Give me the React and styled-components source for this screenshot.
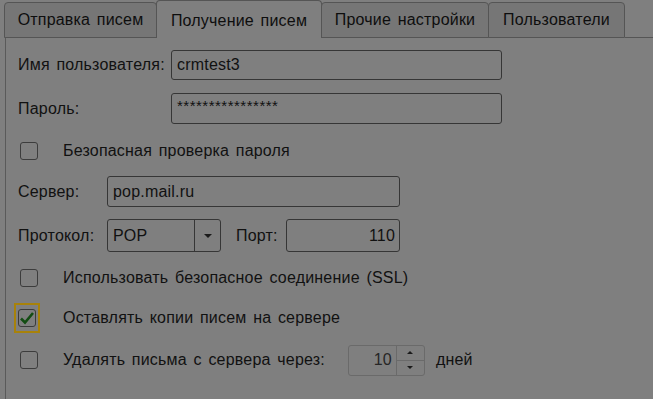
import React from 'react';
import styled, { createGlobalStyle } from 'styled-components';

const GlobalStyle = createGlobalStyle`
    html, body {
        margin: 0;
        padding: 0;
        background: #7f7f7f;
    }
    body {
        font-family: 'Liberation Sans', Arial, sans-serif;
        font-size: 16px;
        letter-spacing: 0.2px;
        word-spacing: 2px;
        color: #111;
    }
`;

const Page = styled.div`
    width: 653px;
    height: 399px;
    overflow: hidden;
    background: #7f7f7f;
`;

const TabBar = styled.div`
    display: flex;
    align-items: flex-end;
    height: 38px;
    padding-left: 5px;
`;

const Tab = styled.div`
    box-sizing: border-box;
    width: ${p => p.$w}px;
    height: ${p => (p.$active ? 38 : 36)}px;
    display: flex;
    align-items: center;
    justify-content: center;
    padding-top: ${p => (p.$active ? 2 : 0)}px;
    background: ${p => (p.$active ? '#7f7f7f' : '#767676')};
    border: 1px solid #555;
    border-bottom: ${p => (p.$active ? 'none' : '1px solid #555')};
    border-radius: 4px 4px 0 0;
    margin-left: -1px;
    color: #0e0e0e;
    white-space: nowrap;
`;

const TabFill = styled.div`
    flex: 1;
    height: 1px;
    background: #555;
`;

const Panel = styled.div`
    margin-left: 5px;
    height: 361px;
    border-left: 1px solid #5a5a5a;
    display: flex;
    flex-direction: column;
    padding-left: 12px;
`;

const Row = styled.div`
    display: flex;
    align-items: center;
    height: ${p => p.$h || 30}px;
    margin-top: ${p => p.$mt}px;
`;

const Label = styled.div`
    width: ${p => p.$w}px;
    padding-left: ${p => p.$pl || 0}px;
    flex-shrink: 0;
    white-space: nowrap;
`;

const Field = styled.div`
    box-sizing: border-box;
    width: ${p => p.$w}px;
    height: 100%;
    border: 1px solid #363636;
    border-radius: 3px;
    display: flex;
    align-items: center;
    justify-content: ${p => (p.$right ? 'flex-end' : 'flex-start')};
    padding: 0 4px 0 5px;
    white-space: nowrap;
`;

const Stars = styled.span`
    font-size: 15px;
    letter-spacing: 0.5px;
    margin-top: -6px;
`;

const Box = styled.div`
    box-sizing: border-box;
    width: 18px;
    height: 18px;
    border: 1px solid #3c3c3c;
    border-radius: 3px;
    display: flex;
    align-items: center;
    justify-content: center;
`;

const Focus = styled.div`
    box-sizing: border-box;
    width: 30px;
    height: 30px;
    margin-left: -6px;
    border: 2px solid #a8820a;
    display: flex;
    align-items: center;
    justify-content: center;
`;

const CheckSlot = styled.div`
    width: 20px;
    margin-left: 2px;
    margin-right: 23px;
    display: flex;
    align-items: center;
    justify-content: flex-start;
`;

const Select = styled.div`
    box-sizing: border-box;
    width: 114px;
    height: 100%;
    border: 1px solid #363636;
    border-radius: 3px;
    display: flex;
`;

const SelectValue = styled.div`
    flex: 1;
    display: flex;
    align-items: center;
    padding-left: 5px;
    border-right: 1px solid #363636;
`;

const SelectArrow = styled.div`
    width: 25px;
    display: flex;
    align-items: center;
    justify-content: center;
`;

const Spin = styled.div`
    box-sizing: border-box;
    width: 77px;
    height: 31px;
    border: 1px solid #6a6a6a;
    border-radius: 3px;
    display: flex;
    margin-left: ${p => p.$ml}px;
`;

const SpinValue = styled.div`
    flex: 1;
    display: flex;
    align-items: center;
    justify-content: flex-end;
    padding-right: 4px;
    border-right: 1px solid #6a6a6a;
    color: #262626;
`;

const SpinButtons = styled.div`
    width: 27px;
    display: flex;
    flex-direction: column;
`;

const SpinButton = styled.div`
    flex: 1;
    display: flex;
    align-items: center;
    justify-content: center;
    border-top: ${p => (p.$lower ? '1px solid #6a6a6a' : 'none')};
`;

const Text = styled.span`
    margin-left: ${p => p.$ml || 0}px;
    white-space: nowrap;
`;

const Tick = () => (
    <svg width="16" height="14" viewBox="0 0 16 14">
        <path d="M2 7.5 L6 11.5 L14 2" fill="none" stroke="#134d13" strokeWidth="2.6" />
    </svg>
);

const Tri = ({ up, size = 4 }) => (
    <svg width={size * 2} height={size} viewBox="0 0 8 4">
        <path d={up ? 'M0 4 L4 0 L8 4 Z' : 'M0 0 L8 0 L4 4 Z'} fill="#1a1a1a" />
    </svg>
);

function CheckRow({ mt, checked, children }) {
    return (
        <Row $mt={mt}>
            <CheckSlot>
                {checked ? (
                    <Focus><Box><Tick /></Box></Focus>
                ) : (
                    <Box />
                )}
            </CheckSlot>
            {children}
        </Row>
    );
}

export default function App() {
    return (
        <Page>
            <GlobalStyle />
            <TabBar>
                <Tab $w={153}>Отправка писем</Tab>
                <Tab $w={166} $active>Получение писем</Tab>
                <Tab $w={168}>Прочие настройки</Tab>
                <Tab $w={137}>Пользователи</Tab>
                <TabFill />
            </TabBar>
            <Panel>
                <Row $mt={12}>
                    <Label $w={153}>Имя пользователя:</Label>
                    <Field $w={331}>crmtest3</Field>
                </Row>
                <Row $mt={13} $h={31}>
                    <Label $w={153}>Пароль:</Label>
                    <Field $w={331}><Stars>****************</Stars></Field>
                </Row>
                <CheckRow mt={12}>
                    <Text>Безопасная проверка пароля</Text>
                </CheckRow>
                <Row $mt={10} $h={31}>
                    <Label $w={89}>Сервер:</Label>
                    <Field $w={293}>pop.mail.ru</Field>
                </Row>
                <Row $mt={12} $h={33}>
                    <Label $w={89}>Протокол:</Label>
                    <Select>
                        <SelectValue>POP</SelectValue>
                        <SelectArrow><Tri /></SelectArrow>
                    </Select>
                    <Label $w={50} $pl={15}>Порт:</Label>
                    <Field $w={114} $right>110</Field>
                </Row>
                <CheckRow mt={11}>
                    <Text>Использовать безопасное соединение (SSL)</Text>
                </CheckRow>
                <CheckRow mt={10} checked>
                    <Text>Оставлять копии писем на сервере</Text>
                </CheckRow>
                <CheckRow mt={12}>
                    <Text>Удалять письма с сервера через:</Text>
                    <Spin $ml={23}>
                        <SpinValue>10</SpinValue>
                        <SpinButtons>
                            <SpinButton><Tri up size={3} /></SpinButton>
                            <SpinButton $lower><Tri size={3} /></SpinButton>
                        </SpinButtons>
                    </Spin>
                    <Text $ml={11}>дней</Text>
                </CheckRow>
            </Panel>
        </Page>
    );
}
